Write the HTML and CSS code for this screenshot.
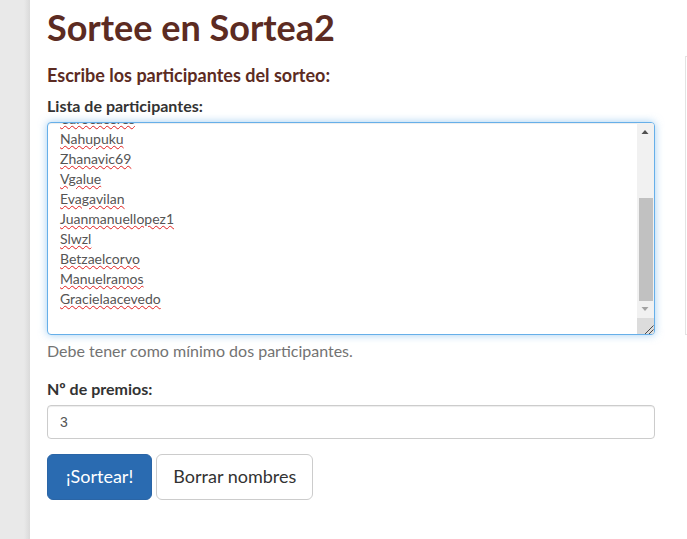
FILE: index.html
```html
<!DOCTYPE html>
<html lang="es">
<head>
<meta charset="utf-8">
<title>Sortee en Sortea2</title>
<link rel="stylesheet" href="styles.css">
</head>
<body>
<div class="page">
  <div class="strip"></div>
  <main class="panel">
    <section class="content">
      <h1 class="title">Sortee en Sortea2</h1>
      <h4 class="subtitle">Escribe los participantes del sorteo:</h4>
      <div class="group">
        <label class="label">Lista de participantes:</label>
        <div class="textarea">
          <div class="viewport">
            <div class="lines">
              <div class="line"><span class="misspelled">Carocaceres</span></div>
              <div class="line"><span class="misspelled">Nahupuku</span></div>
              <div class="line"><span class="misspelled">Zhanavic69</span></div>
              <div class="line"><span class="misspelled">Vgalue</span></div>
              <div class="line"><span class="misspelled">Evagavilan</span></div>
              <div class="line"><span class="misspelled">Juanmanuellopez1</span></div>
              <div class="line"><span class="misspelled">Slwzl</span></div>
              <div class="line"><span class="misspelled">Betzaelcorvo</span></div>
              <div class="line"><span class="misspelled">Manuelramos</span></div>
              <div class="line"><span class="misspelled">Gracielaacevedo</span></div>
              <div class="line">&nbsp;</div>
            </div>
          </div>
          <div class="scrollbar">
            <div class="sb-btn sb-up">
              <svg width="17" height="17" viewBox="0 0 17 17"><path d="M4.5 11h7L8 7z" fill="#505050"/></svg>
            </div>
            <div class="sb-track"><div class="sb-thumb"></div></div>
            <div class="sb-btn sb-down">
              <svg width="17" height="17" viewBox="0 0 17 17"><path d="M4.5 6h7L8 10z" fill="#a3a3a3"/></svg>
            </div>
            <div class="sb-corner">
              <svg width="17" height="16" viewBox="0 0 17 16"><path d="M16.5 7.5L8 16M16.5 11.5L12 16" stroke="#4a4a4a" stroke-width="1" fill="none"/></svg>
            </div>
          </div>
        </div>
        <p class="help">Debe tener como mínimo dos participantes.</p>
      </div>
      <div class="group">
        <label class="label">Nº de premios:</label>
        <div class="input">3</div>
      </div>
      <div class="actions">
        <button class="btn btn-primary">¡Sortear!</button>
        <button class="btn btn-default">Borrar nombres</button>
      </div>
    </section>
    <aside class="sidebar"></aside>
  </main>
</div>
</body>
</html>
```

FILE: styles.css
```css
html, body {
  margin: 0;
  padding: 0;
  height: 100%;
  overflow: hidden;
}
body {
  background: #e9e9e9;
  font-family: Lato, "Open Sans", sans-serif;
  font-size: 16px;
  line-height: 1.42857;
  color: #333;
}
.page {
  display: flex;
  height: 100%;
}
.strip {
  width: 30px;
  flex: none;
  background: linear-gradient(to right, #e9e9e9 0, #e9e9e9 24px, #dadada 30px);
}
.panel {
  flex: 1;
  background: #fff;
  display: flex;
  padding-left: 17px;
  min-width: 0;
}
.content {
  width: 608px;
  flex: none;
  padding-top: 8px;
}
.title {
  margin: 0 0 10px;
  font-size: 36px;
  line-height: 1.1;
  font-weight: 700;
  color: #5c2b22;
}
.subtitle {
  margin: 18px 0 10px;
  font-size: 18px;
  line-height: 1.1;
  font-weight: 700;
  color: #5c2b22;
}
.group {
  margin-bottom: 15px;
}
.label {
  display: block;
  font-weight: 700;
  margin-bottom: 4px;
}
.textarea {
  box-sizing: border-box;
  height: 213px;
  border: 1px solid #66afe9;
  border-radius: 4px;
  box-shadow: inset 0 1px 1px rgba(0,0,0,.075), 0 0 8px rgba(102,175,233,.6);
  display: flex;
  overflow: hidden;
  color: #555;
  background: #fff;
  font-size: 14px;
}
.viewport {
  flex: 1;
  overflow: hidden;
  display: flex;
  flex-direction: column-reverse;
}
.lines {
  padding: 6px 12px 5px;
  line-height: 20px;
}
.misspelled {
  text-decoration: underline wavy #e02020;
  text-decoration-thickness: 1px;
  text-underline-offset: 1px;
}
.scrollbar {
  width: 17px;
  flex: none;
  background: #f1f1f1;
  display: flex;
  flex-direction: column;
}
.sb-btn {
  height: 17px;
  flex: none;
}
.sb-btn svg, .sb-corner svg {
  display: block;
}
.sb-track {
  flex: 1;
  display: flex;
  flex-direction: column;
  justify-content: flex-end;
}
.sb-thumb {
  height: 103px;
  margin: 0 1px 0 2px;
  background: #c1c1c1;
}
.sb-corner {
  height: 16px;
  flex: none;
  background: #dcdcdc;
}
.help {
  margin: 5px 0 10px;
  color: #737373;
}
.input {
  box-sizing: border-box;
  height: 34px;
  padding: 6px 12px;
  border: 1px solid #ccc;
  border-radius: 4px;
  box-shadow: inset 0 1px 1px rgba(0,0,0,.075);
  font-family: "Liberation Sans", Arial, sans-serif;
  font-size: 14px;
  line-height: 20px;
  color: #555;
}
.actions {
  display: flex;
  gap: 4px;
  margin-top: 15px;
}
.btn {
  font-family: Lato, "Open Sans", sans-serif;
  font-size: 18px;
  line-height: 1.3333;
  padding: 10px 16px;
  border-radius: 6px;
  border: 1px solid transparent;
  cursor: pointer;
}
.btn-primary {
  padding: 10px 18px;
  background: #2a6bb1;
  border-color: #2a65a6;
  color: #fff;
}
.btn-default {
  background: #fff;
  border-color: #ccc;
  color: #333;
}
.sidebar {
  margin-left: 30px;
  margin-top: 56px;
  height: 279px;
  flex: 1;
  border: 1px solid #e3e3e3;
  border-right: none;
  box-sizing: border-box;
}
```
